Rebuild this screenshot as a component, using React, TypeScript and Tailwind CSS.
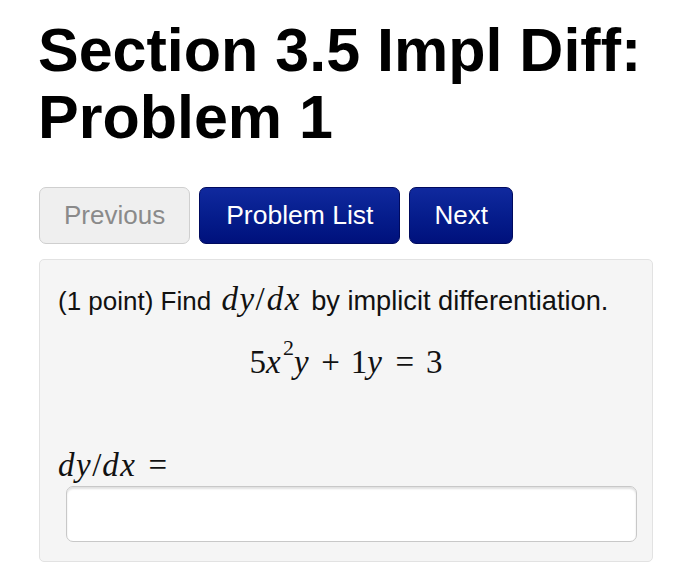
import React from "react";

const sans = { fontFamily: '"Liberation Sans", Arial, Helvetica, sans-serif' };
const serif = { fontFamily: '"Liberation Serif", "Times New Roman", serif' };

function MI({ children }: { children: React.ReactNode }) {
  return <span className="italic tracking-[1.5px]">{children}</span>;
}

export default function App() {
  return (
    <div className="w-[700px] h-[584px] bg-white overflow-hidden" style={sans}>
      <div className="pl-[38px] pr-[20px] pt-[17px]">
        <h1 className="text-[61px] leading-[67px] font-bold text-black">
          Section 3.5 Impl Diff:
          <br />
          Problem 1
        </h1>

        <div className="mt-[36px] ml-[1px] flex gap-[9px]">
          <button className="h-[57px] px-[24px] rounded-[7px] border border-[#cfcfcf] bg-[#efefef] text-[#8a8a8a] text-[26px]">
            Previous
          </button>
          <button className="h-[57px] px-[26px] rounded-[7px] border border-[#000a5e] bg-gradient-to-b from-[#10299e] to-[#00107c] text-white text-[26.5px]">
            Problem List
          </button>
          <button className="h-[57px] px-[24px] rounded-[7px] border border-[#000a5e] bg-gradient-to-b from-[#10299e] to-[#00107c] text-white text-[26px]">
            Next
          </button>
        </div>

        <div className="mt-[15px] ml-[1px] w-[614px] h-[303px] rounded-[5px] border border-[#e2e2e2] bg-[#f5f5f5] px-[18px] pt-[22px]">
          <p className="text-[26px] leading-[34px] text-[#111]">
            (1 point) Find{" "}
            <span className="text-[33px] tracking-[2px] mx-[3px]" style={serif}>
              <MI>dy</MI>
              <span>/</span>
              <MI>dx</MI>
            </span>{" "}
            <span className="text-[27.2px]">by implicit differentiation.</span>
          </p>
          <div className="mt-[24px] text-center text-[33px] leading-[40px] text-[#111]" style={serif}>
            5<MI>x</MI>
            <sup className="text-[22px] top-[-0.8em] ml-[1px]">2</sup>
            <MI>y</MI>
            <span className="mx-[11px]">+</span>1<MI>y</MI>
            <span className="mx-[12px]">=</span>3
          </div>

          <div className="mt-[64px] text-[33px] leading-[38px] text-[#111]" style={serif}>
            <MI>dy</MI>
            <span className="tracking-[1px]">/</span>
            <MI>dx</MI>
            <span className="ml-[12px]">=</span>
          </div>
          <div className="mt-[2px] ml-[8px] w-[571px] h-[56px] rounded-[7px] border border-[#c8c8c8] bg-white shadow-[inset_0_2px_2px_rgba(0,0,0,0.12)]" />
        </div>
      </div>
    </div>
  );
}
